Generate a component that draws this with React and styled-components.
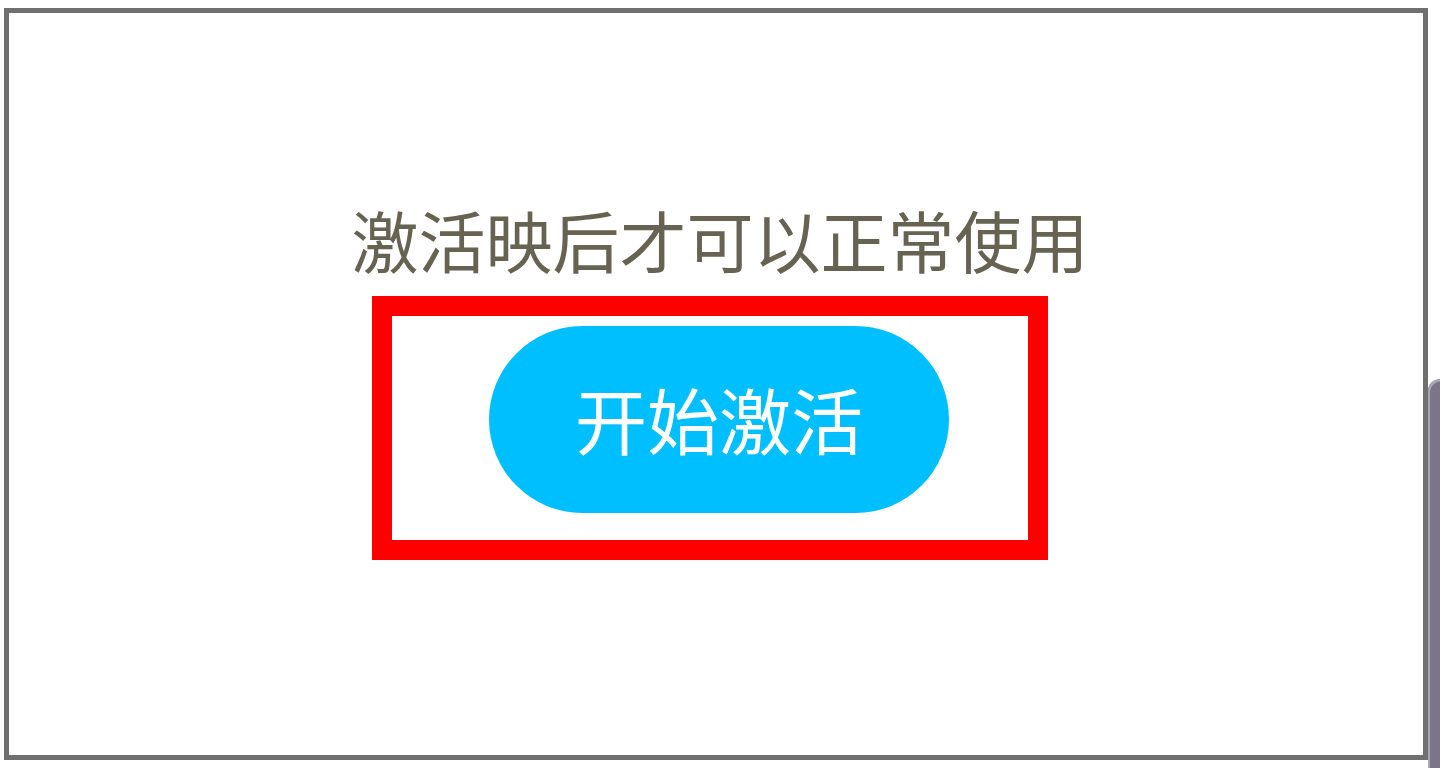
import React from 'react';
import styled, { createGlobalStyle } from 'styled-components';

const GlobalStyle = createGlobalStyle`
  html, body {
    margin: 0;
    padding: 0;
    background: #ffffff;
    font-family: "Noto Sans CJK SC", "Noto Sans", sans-serif;
  }
`;

const Page = styled.div`
  width: 1440px;
  height: 768px;
  padding: 8px 12px 8px 4px;
  box-sizing: border-box;
  position: relative;
  overflow: hidden;
`;

const Frame = styled.div`
  height: 100%;
  box-sizing: border-box;
  border: 5px solid #707070;
  display: flex;
  flex-direction: column;
  align-items: center;
  padding-top: 192px;
`;

const Notice = styled.p`
  margin: 0 0 0 8px;
  font-size: 67px;
  line-height: 67px;
  color: #666352;
  letter-spacing: 0;
`;

const Highlight = styled.div`
  margin-top: 24px;
  margin-right: 12px;
  width: 676px;
  height: 264px;
  box-sizing: border-box;
  border: 20px solid #ff0000;
  padding: 10px 79px 0 97px;
`;

const ActivateButton = styled.button`
  width: 460px;
  height: 187px;
  border: none;
  border-radius: 94px;
  background: #00bfff;
  color: #ffffff;
  font-family: "Noto Sans CJK SC", "Noto Sans", sans-serif;
  font-size: 72px;
  line-height: 1;
  padding: 0 0 4px;
  display: flex;
  align-items: center;
  justify-content: center;
  cursor: pointer;
`;

const SideHandle = styled.div`
  position: absolute;
  right: 0;
  top: 379px;
  bottom: 0;
  width: 12px;
  background: #7a7688;
  border-top-left-radius: 12px;
  box-shadow: inset 2px 2px 0 #a9a7b1;
`;

export default function App() {
  return (
    <>
      <GlobalStyle />
      <Page>
        <Frame>
          <Notice>激活映后才可以正常使用</Notice>
          <Highlight>
            <ActivateButton>开始激活</ActivateButton>
          </Highlight>
        </Frame>
        <SideHandle />
      </Page>
    </>
  );
}
